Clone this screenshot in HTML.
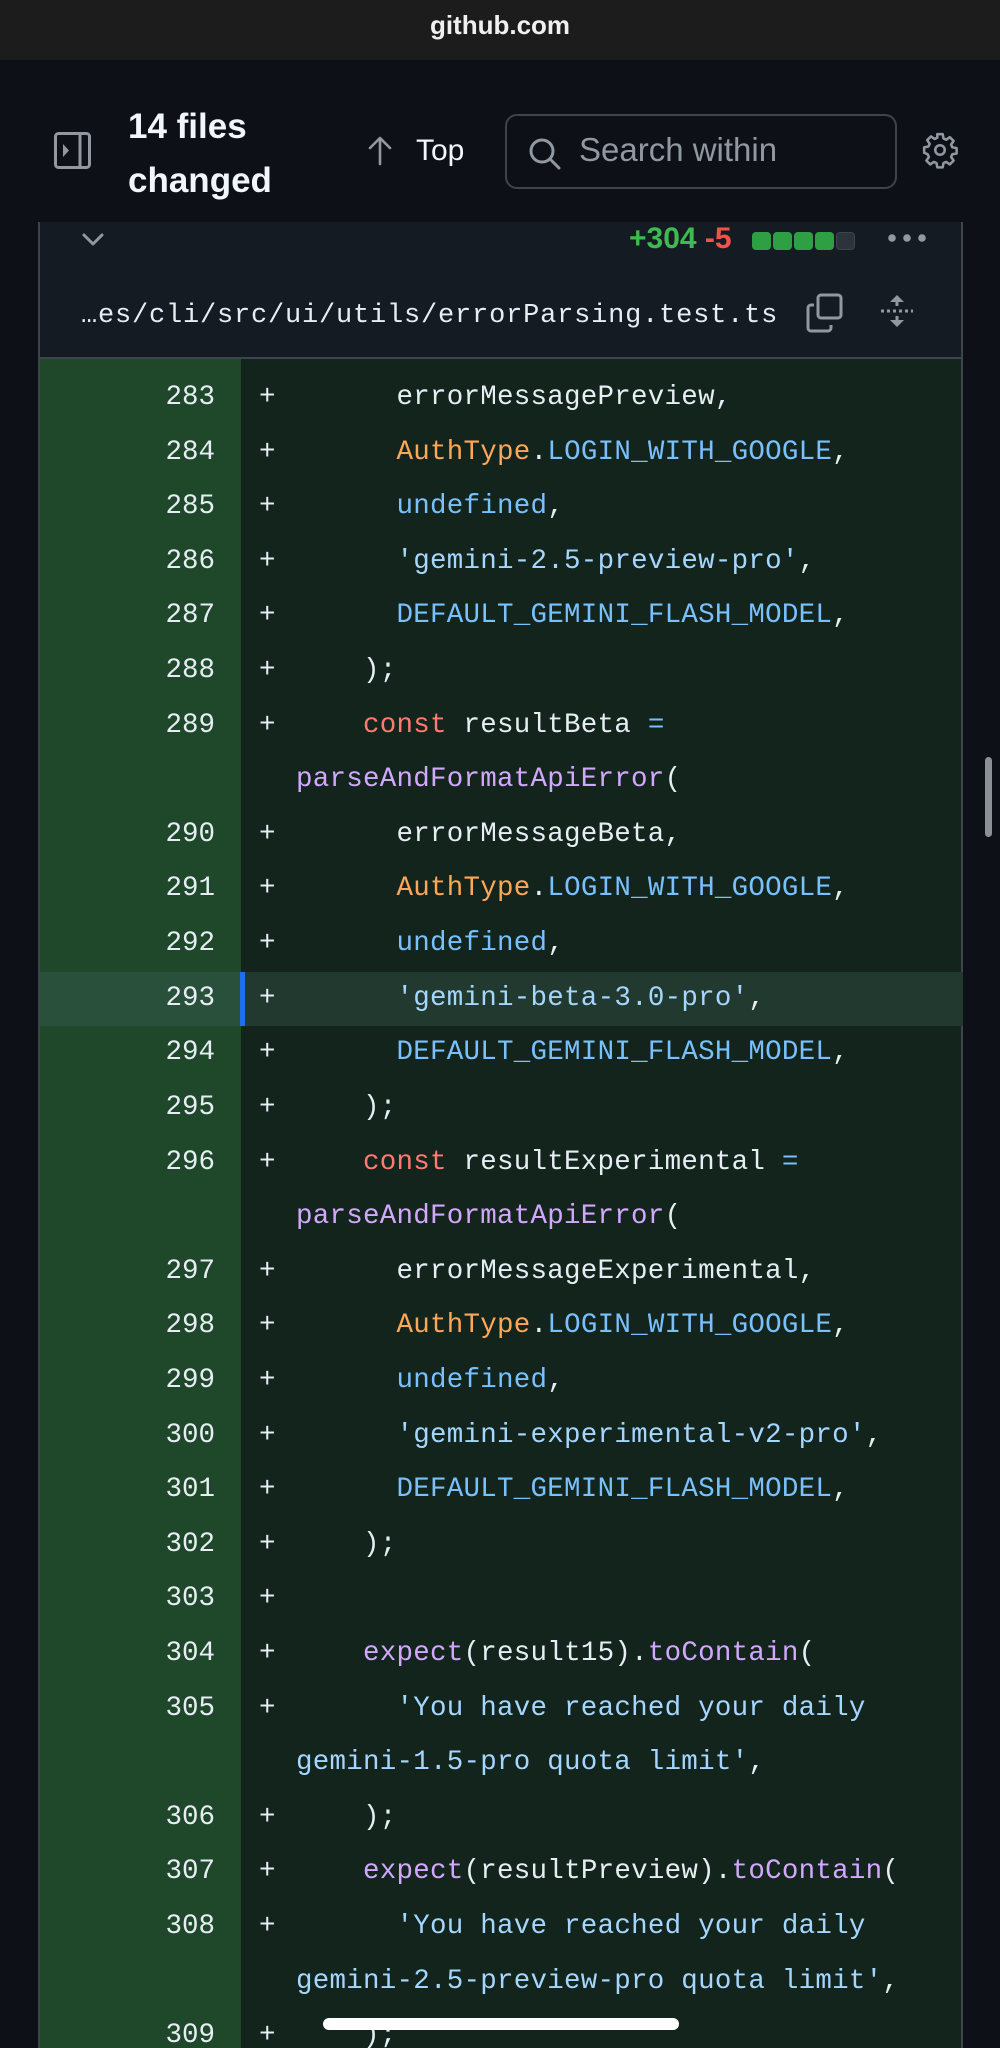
<!DOCTYPE html>
<html><head><meta charset="utf-8">
<style>
*{margin:0;padding:0;box-sizing:border-box}
html,body{width:1000px;height:2048px;overflow:hidden;background:#0d1117}
body{position:relative;font-family:"Liberation Sans",sans-serif;color:#e6edf3}
.top{position:absolute;left:0;top:0;width:1000px;height:60px;background:#1c1c1c;text-align:center;font-size:26px;font-weight:bold;line-height:50px;color:#f0f0f0}
.hdr{position:absolute;left:0;top:60px;width:1000px;height:163px;background:#0d1117}
.t14{position:absolute;left:128px;top:100px;font-size:35px;font-weight:bold;line-height:54px;color:#f0f6fc}
.topbtn{position:absolute;left:416px;top:134px;font-size:30px;color:#f0f6fc}
.search{position:absolute;left:505px;top:114px;width:392px;height:75px;border:2px solid #3d444d;border-radius:12px;background:#0d1117}
.search span{position:absolute;left:72px;top:15px;font-size:33px;color:#9198a1}
.card{position:absolute;left:38px;top:222px;width:925px;height:137px;background:#151b23;border-left:2px solid #3d444d;border-right:2px solid #3d444d;border-bottom:2px solid #3d444d}
.stat{position:absolute;left:629px;top:222px;font-size:30px;font-weight:bold;line-height:34px}
.blk{position:absolute;top:232px;width:19px;height:18px;border-radius:4px;background:#2ea043}
.fname{position:absolute;left:81px;top:301px;font-family:"Liberation Mono",monospace;font-size:27px;letter-spacing:0.8px;color:#e6edf3}
.code{position:absolute;left:38px;top:359px;width:925px;height:1700px;background:#12241c;border-left:2px solid #3d444d;border-right:2px solid #3d444d}
.gut{position:absolute;left:0;top:0;width:201px;height:100%;background:#1f482b}
.rows{position:absolute;left:0;top:12px;width:923px}
.r{position:relative;height:54.62px;font-family:"Liberation Mono",monospace;font-size:27.5px;line-height:54.62px;white-space:pre}
.n{position:absolute;right:748px;top:0;color:#e6edf3}
.p{position:absolute;left:219px;top:0;color:#e6edf3}
.c{position:absolute;left:256px;top:0;color:#e6edf3;letter-spacing:0.25px}
.hl{background:#21392e}
.hl .g{position:absolute;left:0;top:0;width:201px;height:100%;background:#28503a}
.hl .bar{position:absolute;left:200px;top:0;width:5px;height:100%;background:#1f6feb}
.k{color:#ff7b72}.f{color:#d2a8ff}.b{color:#79c0ff}.o{color:#ffa657}.s{color:#a5d6ff}
.scroll{position:absolute;left:985px;top:757px;width:7px;height:80px;border-radius:4px;background:#8b8f96}
.home{position:absolute;left:323px;top:2018px;width:356px;height:12px;border-radius:6px;background:#fff}
</style></head><body>
<div class="top">github.com</div>
<div class="hdr"></div>
<svg style="position:absolute;left:53px;top:131px" width="40" height="40" viewBox="0 0 40 40"><rect x="2.5" y="2.5" width="34" height="34" rx="3" fill="none" stroke="#9198a1" stroke-width="3"/><line x1="27" y1="3" x2="27" y2="36" stroke="#9198a1" stroke-width="3"/><path d="M10 13 L16 19.5 L10 26 Z" fill="#9198a1"/></svg>
<div class="t14">14 files<br>changed</div>
<svg style="position:absolute;left:366px;top:136px" width="28" height="30" viewBox="0 0 28 30"><path d="M14 28 V3 M4 12 L14 2 L24 12" fill="none" stroke="#9198a1" stroke-width="2.6" stroke-linecap="round" stroke-linejoin="round"/></svg>
<div class="topbtn">Top</div>
<div class="search"><svg style="position:absolute;left:20px;top:20px" width="36" height="36" viewBox="0 0 36 36"><circle cx="15" cy="15" r="11" fill="none" stroke="#9198a1" stroke-width="3"/><line x1="23" y1="23" x2="32" y2="32" stroke="#9198a1" stroke-width="3" stroke-linecap="round"/></svg><span>Search within</span></div>
<svg style="position:absolute;left:921px;top:131px" width="38" height="38" viewBox="0 0 24 24"><path d="M10.3 2h3.4l.5 2.7 1.7.8 2.3-1.6 2.4 2.4-1.6 2.3.8 1.7 2.7.5v3.4l-2.7.5-.8 1.7 1.6 2.3-2.4 2.4-2.3-1.6-1.7.8-.5 2.7h-3.4l-.5-2.7-1.7-.8-2.3 1.6-2.4-2.4 1.6-2.3-.8-1.7L2 13.7v-3.4l2.7-.5.8-1.7-1.6-2.3 2.4-2.4 2.3 1.6 1.7-.8z" fill="none" stroke="#9198a1" stroke-width="1.6" stroke-linejoin="round"/><circle cx="12" cy="12" r="3" fill="none" stroke="#9198a1" stroke-width="1.6"/></svg>
<div class="card"></div>
<svg style="position:absolute;left:81px;top:232px" width="24" height="16" viewBox="0 0 24 16"><path d="M3 3 L12 12 L21 3" fill="none" stroke="#9198a1" stroke-width="3" stroke-linecap="round" stroke-linejoin="round"/></svg>
<div class="stat"><span style="color:#3fb950">+304</span> <span style="color:#f85149">-5</span></div>
<div class="blk" style="left:752px"></div><div class="blk" style="left:773px"></div><div class="blk" style="left:794px"></div><div class="blk" style="left:815px"></div><div class="blk" style="left:836px;background:#2d333b;border:1px solid #3d444d"></div>
<svg style="position:absolute;left:886px;top:231px" width="42" height="14"><circle cx="6" cy="7" r="3.8" fill="#9198a1"/><circle cx="21" cy="7" r="3.8" fill="#9198a1"/><circle cx="36" cy="7" r="3.8" fill="#9198a1"/></svg>
<div class="fname">…es/cli/src/ui/utils/errorParsing.test.ts</div>
<svg style="position:absolute;left:806px;top:293px" width="38" height="40" viewBox="0 0 38 40"><rect x="12" y="2" width="23" height="23" rx="3" fill="none" stroke="#9198a1" stroke-width="3"/><path d="M8 12 H5 a3 3 0 0 0 -3 3 V35 a3 3 0 0 0 3 3 H22 a3 3 0 0 0 3 -3 V32" fill="none" stroke="#9198a1" stroke-width="3"/></svg>
<svg style="position:absolute;left:880px;top:293px" width="34" height="36" viewBox="0 0 34 36"><path d="M17 2 L10 9 H24 Z M17 34 L10 27 H24 Z" fill="#9198a1"/><path d="M17 8 V13 M17 23 V28" stroke="#9198a1" stroke-width="3"/><path d="M1 18 H33" stroke="#9198a1" stroke-width="3" stroke-dasharray="3 3"/></svg>
<div class="code"><div class="gut"></div><div class="rows">
<div class="r"><span class="n">283</span><span class="p">+</span><span class="c">      errorMessagePreview,</span></div>
<div class="r"><span class="n">284</span><span class="p">+</span><span class="c">      <span class="o">AuthType</span>.<span class="b">LOGIN_WITH_GOOGLE</span>,</span></div>
<div class="r"><span class="n">285</span><span class="p">+</span><span class="c">      <span class="b">undefined</span>,</span></div>
<div class="r"><span class="n">286</span><span class="p">+</span><span class="c">      <span class="s">'gemini-2.5-preview-pro'</span>,</span></div>
<div class="r"><span class="n">287</span><span class="p">+</span><span class="c">      <span class="b">DEFAULT_GEMINI_FLASH_MODEL</span>,</span></div>
<div class="r"><span class="n">288</span><span class="p">+</span><span class="c">    );</span></div>
<div class="r"><span class="n">289</span><span class="p">+</span><span class="c">    <span class="k">const</span> resultBeta <span class="b">=</span></span></div>
<div class="r"><span class="c"><span class="f">parseAndFormatApiError</span>(</span></div>
<div class="r"><span class="n">290</span><span class="p">+</span><span class="c">      errorMessageBeta,</span></div>
<div class="r"><span class="n">291</span><span class="p">+</span><span class="c">      <span class="o">AuthType</span>.<span class="b">LOGIN_WITH_GOOGLE</span>,</span></div>
<div class="r"><span class="n">292</span><span class="p">+</span><span class="c">      <span class="b">undefined</span>,</span></div>
<div class="r hl"><span class="g"></span><span class="bar"></span><span class="n">293</span><span class="p">+</span><span class="c">      <span class="s">'gemini-beta-3.0-pro'</span>,</span></div>
<div class="r"><span class="n">294</span><span class="p">+</span><span class="c">      <span class="b">DEFAULT_GEMINI_FLASH_MODEL</span>,</span></div>
<div class="r"><span class="n">295</span><span class="p">+</span><span class="c">    );</span></div>
<div class="r"><span class="n">296</span><span class="p">+</span><span class="c">    <span class="k">const</span> resultExperimental <span class="b">=</span></span></div>
<div class="r"><span class="c"><span class="f">parseAndFormatApiError</span>(</span></div>
<div class="r"><span class="n">297</span><span class="p">+</span><span class="c">      errorMessageExperimental,</span></div>
<div class="r"><span class="n">298</span><span class="p">+</span><span class="c">      <span class="o">AuthType</span>.<span class="b">LOGIN_WITH_GOOGLE</span>,</span></div>
<div class="r"><span class="n">299</span><span class="p">+</span><span class="c">      <span class="b">undefined</span>,</span></div>
<div class="r"><span class="n">300</span><span class="p">+</span><span class="c">      <span class="s">'gemini-experimental-v2-pro'</span>,</span></div>
<div class="r"><span class="n">301</span><span class="p">+</span><span class="c">      <span class="b">DEFAULT_GEMINI_FLASH_MODEL</span>,</span></div>
<div class="r"><span class="n">302</span><span class="p">+</span><span class="c">    );</span></div>
<div class="r"><span class="n">303</span><span class="p">+</span><span class="c"></span></div>
<div class="r"><span class="n">304</span><span class="p">+</span><span class="c">    <span class="f">expect</span>(result15).<span class="f">toContain</span>(</span></div>
<div class="r"><span class="n">305</span><span class="p">+</span><span class="c">      <span class="s">'You have reached your daily</span></span></div>
<div class="r"><span class="c"><span class="s">gemini-1.5-pro quota limit'</span>,</span></div>
<div class="r"><span class="n">306</span><span class="p">+</span><span class="c">    );</span></div>
<div class="r"><span class="n">307</span><span class="p">+</span><span class="c">    <span class="f">expect</span>(resultPreview).<span class="f">toContain</span>(</span></div>
<div class="r"><span class="n">308</span><span class="p">+</span><span class="c">      <span class="s">'You have reached your daily</span></span></div>
<div class="r"><span class="c"><span class="s">gemini-2.5-preview-pro quota limit'</span>,</span></div>
<div class="r"><span class="n">309</span><span class="p">+</span><span class="c">    );</span></div>
</div></div>
<div class="scroll"></div>
<div class="home"></div>
</body></html>
